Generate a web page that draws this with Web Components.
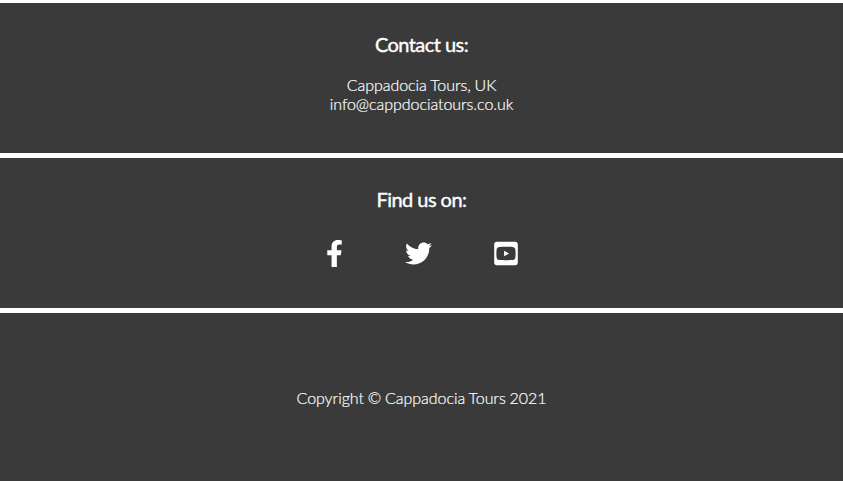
<!DOCTYPE html>
<html lang="en"><head><meta charset="utf-8"><title>Cappadocia Tours</title>
<style>body{margin:0;background:#fff;font-family:Lato,sans-serif;color:#fff}</style></head><body>
<site-footer></site-footer>
<script>
class FooterPanel extends HTMLElement{constructor(){super();this.attachShadow({mode:"open"}).innerHTML=`
<style>:host{display:block;box-sizing:border-box;height:150px;background:#3a3a3a;text-align:center;padding-top:29px;font-weight:300;font-size:16px;line-height:19px;letter-spacing:-.05px;word-spacing:-.4px;-webkit-text-stroke:.2px #fff}
:host([plain]){height:168px;padding-top:75px}
h2{margin:0 0 19px;font-size:20px;line-height:24px;font-weight:400;letter-spacing:-.55px;word-spacing:0;-webkit-text-stroke:.4px #fff}
</style>${this.hasAttribute("heading")?`<h2>${this.getAttribute("heading")}</h2>`:""}<slot></slot>`}}
customElements.define("footer-panel",FooterPanel);
const icons={
facebook:["0 0 320 512",17,"M279.14 288l14.22-92.66h-88.91v-60.13c0-25.35 12.42-50.06 52.24-50.06h40.42V6.26S260.43 0 225.36 0c-73.22 0-121.08 44.38-121.08 124.72v70.62H22.89V288h81.39v224h100.17V288z"],
twitter:["0 0 512 512",27,"M459.37 151.716c.325 4.548.325 9.097.325 13.645 0 138.72-105.583 298.558-298.558 298.558-59.452 0-114.68-17.219-161.137-47.106 8.447.974 16.568 1.299 25.34 1.299 49.055 0 94.213-16.568 130.274-44.832-46.132-.975-84.792-31.188-98.112-72.772 6.498.974 12.995 1.624 19.818 1.624 9.421 0 18.843-1.3 27.614-3.573-48.081-9.747-84.143-51.98-84.143-102.985v-1.299c13.969 7.797 30.214 12.67 47.431 13.319-28.264-18.843-46.781-51.005-46.781-87.391 0-19.492 5.197-37.36 14.294-52.954 51.655 63.675 129.3 105.258 216.365 109.807-1.624-7.797-2.599-15.918-2.599-24.04 0-57.828 46.782-104.934 104.934-104.934 30.213 0 57.502 12.67 76.67 33.137 23.715-4.548 46.456-13.32 66.599-25.34-7.798 24.366-24.366 44.833-46.132 57.827 21.117-2.273 41.584-8.122 60.426-16.243-14.292 20.791-32.161 39.308-52.628 54.253z"],
youtube:["0 0 448 512",24,"M186.8 202.1l95.2 54.1-95.2 54.1V202.1zM448 80v352c0 26.5-21.5 48-48 48H48c-26.5 0-48-21.5-48-48V80c0-26.5 21.5-48 48-48h352c26.5 0 48 21.5 48 48zm-42 176.3s0-59.6-7.6-88.2c-4.2-15.8-16.5-28.2-32.2-32.4C337.9 128 224 128 224 128s-113.9 0-142.2 7.7c-15.7 4.2-28 16.6-32.2 32.4-7.6 28.5-7.6 88.2-7.6 88.2s0 59.6 7.6 88.2c4.2 15.8 16.5 27.7 32.2 31.9C110.1 384 224 384 224 384s113.9 0 142.2-7.7c15.7-4.2 28-16.1 32.2-31.9 7.6-28.5 7.6-88.1 7.6-88.1z"]};
class SocialIcon extends HTMLElement{constructor(){super();const i=icons[this.getAttribute("name")];this.attachShadow({mode:"open"}).innerHTML=`<style>:host{display:block;height:27px}svg{display:block;height:27px;fill:#fff}</style><svg width="${i[1]}" viewBox="${i[0]}"><path d="${i[2]}"/></svg>`}}
customElements.define("social-icon",SocialIcon);
class SiteFooter extends HTMLElement{constructor(){super();this.attachShadow({mode:"open"}).innerHTML=`<style>:host{display:grid;gap:5px;padding-top:3px}div{display:flex;justify-content:center;gap:62px;padding-top:10px}p{margin:0}</style>
<footer-panel heading="Contact us:"><p>Cappadocia Tours, UK</p><p>info@cappdociatours.co.uk</p></footer-panel>
<footer-panel heading="Find us on:"><div><social-icon name="facebook"></social-icon><social-icon name="twitter"></social-icon><social-icon name="youtube"></social-icon></div></footer-panel>
<footer-panel plain><p>Copyright © Cappadocia Tours 2021</p></footer-panel>`}}
customElements.define("site-footer",SiteFooter);
</script></body></html>
